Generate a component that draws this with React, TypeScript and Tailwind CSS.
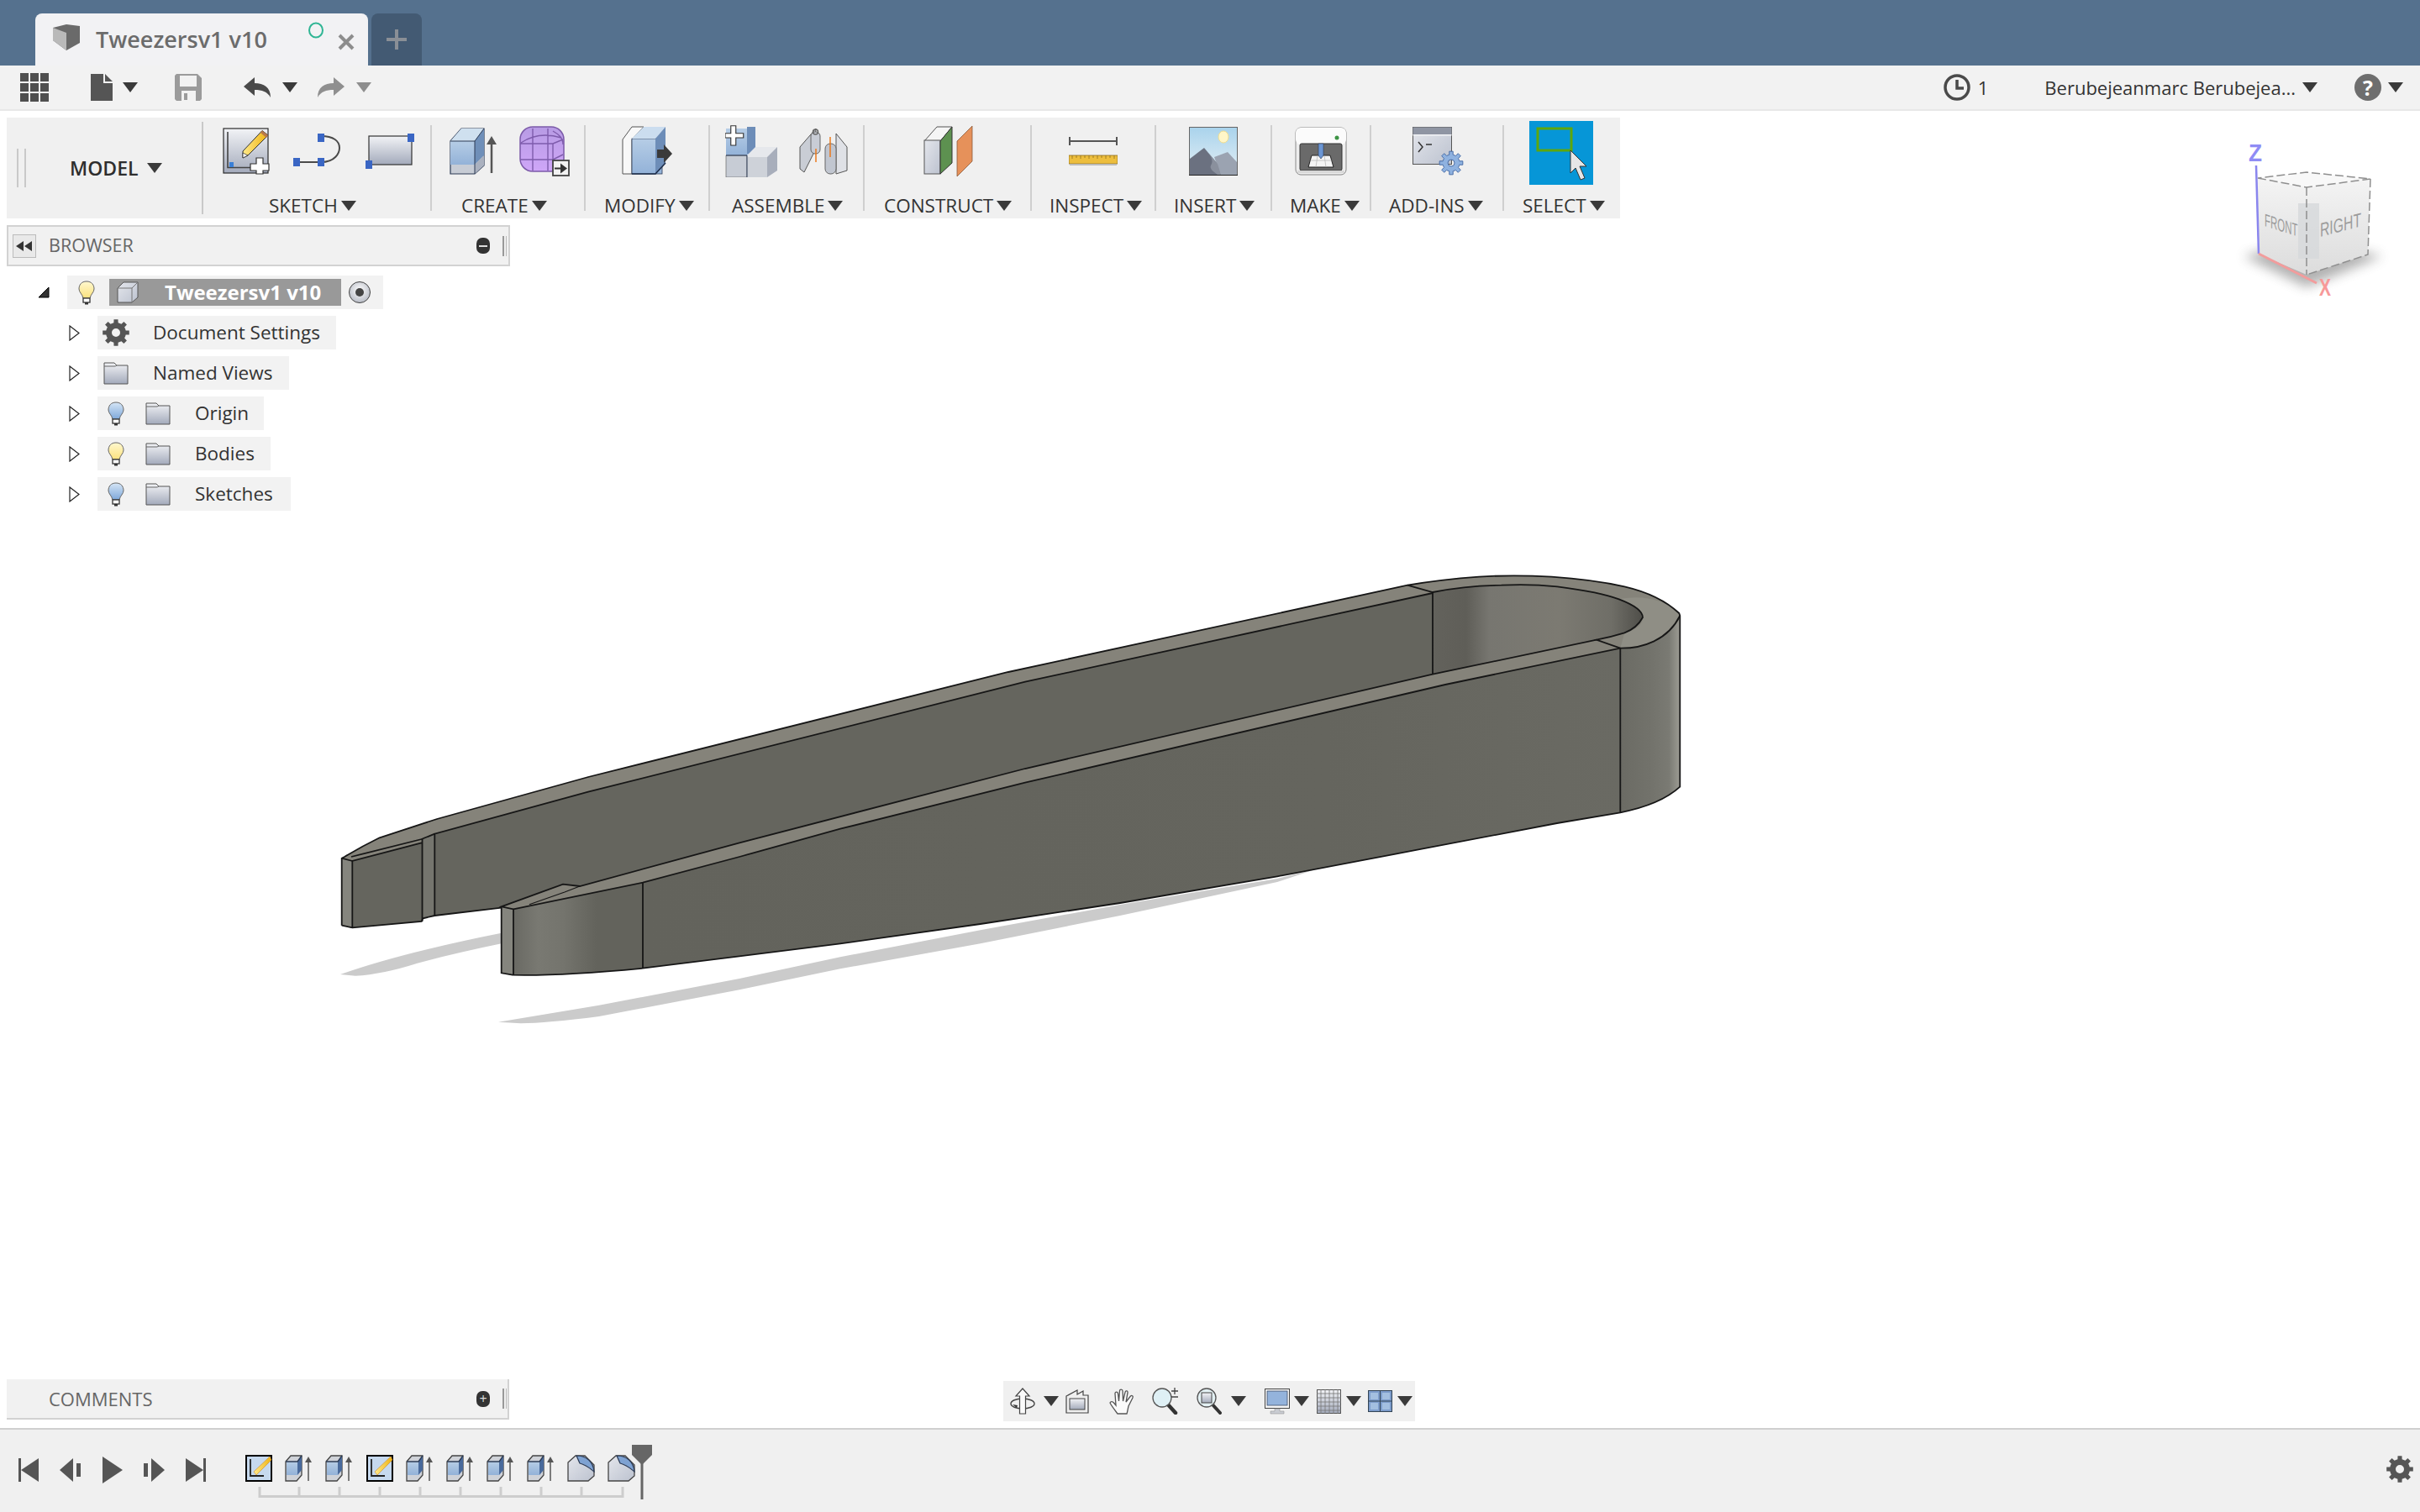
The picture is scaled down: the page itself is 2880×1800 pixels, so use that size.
import type { ReactNode } from "react";

// Fusion 360 style window: tab bar, quick access bar, ribbon, browser tree,
// model viewport, navigation bar and timeline.

const gearPath = (cx: number, cy: number, r1: number, r2: number, hole: number, teeth = 8) => {
  let d = "";
  const step = (Math.PI * 2) / teeth;
  for (let i = 0; i < teeth; i++) {
    const a = i * step;
    const pts: [number, number][] = [
      [r1, a - step * 0.5],
      [r1, a - step * 0.28],
      [r2, a - step * 0.2],
      [r2, a + step * 0.2],
      [r1, a + step * 0.28],
    ];
    for (const [r, t] of pts) {
      const x = cx + r * Math.sin(t);
      const y = cy - r * Math.cos(t);
      d += `${d ? "L" : "M"}${x.toFixed(2)} ${y.toFixed(2)}`;
    }
  }
  d += `Z M${cx + hole} ${cy} A${hole} ${hole} 0 1 0 ${cx - hole} ${cy} A${hole} ${hole} 0 1 0 ${cx + hole} ${cy}Z`;
  return d;
};

function Defs() {
  return (
    <svg className="absolute h-0 w-0">
      <defs>
        <linearGradient id="silver" x1="0" y1="0" x2="0" y2="1">
          <stop offset="0" stopColor="#f2f3f6" />
          <stop offset="1" stopColor="#a3aabb" />
        </linearGradient>
        <linearGradient id="silverSoft" x1="0" y1="0" x2="1" y2="1">
          <stop offset="0" stopColor="#e4e6ec" />
          <stop offset="1" stopColor="#bcc2cf" />
        </linearGradient>
        <linearGradient id="blueFace" x1="0" y1="0" x2="0" y2="1">
          <stop offset="0" stopColor="#b6cde6" />
          <stop offset="1" stopColor="#93b2d8" />
        </linearGradient>
        <linearGradient id="pencil" x1="0" y1="0" x2="1" y2="0">
          <stop offset="0" stopColor="#ffe98a" />
          <stop offset="1" stopColor="#efb310" />
        </linearGradient>
        <linearGradient id="sky" x1="0" y1="0" x2="0" y2="1">
          <stop offset="0" stopColor="#a9d3ec" />
          <stop offset="1" stopColor="#e5eff5" />
        </linearGradient>
        <linearGradient id="form" x1="0" y1="0" x2="0" y2="1">
          <stop offset="0" stopColor="#b79be4" />
          <stop offset="1" stopColor="#cfa6f8" />
        </linearGradient>
        <linearGradient id="bulbY" x1="0" y1="0" x2="0" y2="1">
          <stop offset="0" stopColor="#fff8cf" />
          <stop offset="1" stopColor="#fbe27e" />
        </linearGradient>
        <linearGradient id="bulbB" x1="0" y1="0" x2="0" y2="1">
          <stop offset="0" stopColor="#d5e5f5" />
          <stop offset="1" stopColor="#7ea8da" />
        </linearGradient>
        <radialGradient id="radio" cx="0.5" cy="0.4" r="0.6">
          <stop offset="0" stopColor="#ffffff" />
          <stop offset="1" stopColor="#b8bcc6" />
        </radialGradient>
        <linearGradient id="nearTip" gradientUnits="userSpaceOnUse" x1="611" y1="0" x2="710" y2="0">
          <stop offset="0" stopColor="#696963" />
          <stop offset="0.3" stopColor="#797972" />
          <stop offset="0.6" stopColor="#74746d" />
          <stop offset="1" stopColor="#63635c" />
        </linearGradient>
        <linearGradient id="nearFace" gradientUnits="userSpaceOnUse" x1="765" y1="0" x2="1928" y2="0">
          <stop offset="0" stopColor="#63635c" />
          <stop offset="0.7" stopColor="#65655e" />
          <stop offset="1" stopColor="#6a6a63" />
        </linearGradient>
        <linearGradient id="wall" gradientUnits="userSpaceOnUse" x1="1928" y1="0" x2="1999" y2="0">
          <stop offset="0" stopColor="#6b6b64" />
          <stop offset="0.5" stopColor="#72726b" />
          <stop offset="0.82" stopColor="#7a7a73" />
          <stop offset="1" stopColor="#9c9b93" />
        </linearGradient>
        <linearGradient id="cavity" gradientUnits="userSpaceOnUse" x1="1705" y1="0" x2="1955" y2="0">
          <stop offset="0" stopColor="#63625c" />
          <stop offset="0.16" stopColor="#5f5e58" />
          <stop offset="0.27" stopColor="#777670" />
          <stop offset="0.6" stopColor="#7c7a72" />
          <stop offset="0.85" stopColor="#6f6e67" />
          <stop offset="1" stopColor="#4f4e49" />
        </linearGradient>
        <linearGradient id="cubeFace" x1="0" y1="0" x2="0" y2="1">
          <stop offset="0" stopColor="#f4f4f4" />
          <stop offset="1" stopColor="#dcdcdc" />
        </linearGradient>
        <filter id="blur6" x="-30%" y="-60%" width="160%" height="220%">
          <feGaussianBlur stdDeviation="7" />
        </filter>
      </defs>
    </svg>
  );
}

function Caret({ grey }: { grey?: boolean }) {
  return (
    <svg width={18} height={12} viewBox="0 0 18 12" className="shrink-0">
      <polygon points="0,0 18,0 9,12" fill={grey ? "#8e8e8e" : "#3a3a3a"} />
    </svg>
  );
}

function Ico({ w, h, className, children }: { w: number; h: number; className?: string; children: ReactNode }) {
  return (
    <svg width={w} height={h} viewBox={`0 0 ${w} ${h}`} className={`shrink-0 ${className ?? ""}`}>
      {children}
    </svg>
  );
}

/* ---------- ribbon icons ---------- */

const Blue = ({ x, y }: { x: number; y: number }) => (
  <rect x={x} y={y} width="8" height="10" fill="#3a66c4" />
);

function SketchIcon() {
  return (
    <Ico w={56} h={56}>
      <rect x="1" y="1" width="53" height="53" fill="url(#silver)" stroke="#2b2b2b" strokeWidth="1.2" />
      <path d="M6 5V47.500H34" fill="none" stroke="#444" strokeWidth="1.6" />
      <rect x="8" y="41" width="5" height="6" fill="#3a7fd6" />
      <path d="M24 28 L47 3.500 L54 9 L30 33 L24 36 Z" fill="url(#pencil)" stroke="#333" strokeWidth="1" />
      <path d="M47 3.500 L54 9 L52 12 L45 6Z" fill="#b9794a" />
      <path d="M24 30 L24 36 L30 33Z" fill="#fff" stroke="#333" strokeWidth="0.8" />
      <path d="M41 37h8v7h7v8h-7v4h-8v-4h-7v-8h7z" fill="#fff" stroke="#333" strokeWidth="1.2" transform="translate(-1 -1)" />
    </Ico>
  );
}

function ArcIcon() {
  return (
    <Ico w={58} h={42}>
      <path d="M4 34H33C50 34 55 23 55 17C55 9 48 3 33 3" fill="none" stroke="#4a4a4a" strokeWidth="2" />
      <Blue x={0} y={29} />
      <Blue x={29} y={29} />
      <Blue x={29} y={0} />
    </Ico>
  );
}

function RectIcon() {
  return (
    <Ico w={58} h={42}>
      <rect x="4" y="3" width="51" height="34" fill="url(#silver)" stroke="#333" strokeWidth="1.2" />
      <Blue x={50} y={0} />
      <Blue x={0} y={32} />
    </Ico>
  );
}

function ExtrudeIcon() {
  return (
    <Ico w={56} h={56}>
      <path d="M1 16 L14 1 H41 V45 L30 55 H1Z" fill="#c7ccd5" stroke="#2c3b55" strokeWidth="1.2" />
      <path d="M1 16 L14 1 H41 L30 16Z" fill="#cfe0ef" />
      <rect x="1" y="16" width="29" height="28" fill="url(#blueFace)" />
      <path d="M30 16 L41 1 V33 L30 44Z" fill="#6f8fb9" />
      <path d="M30 44 L41 33 V45 L30 55Z" fill="#aab1bf" />
      <path d="M1 16H30L41 1M30 16V55" fill="none" stroke="#2c3b55" strokeWidth="1" />
      <path d="M50 54V14" stroke="#555" strokeWidth="2.500" />
      <path d="M44 20L50 10L56 20Z" fill="#555" />
    </Ico>
  );
}

function FormIcon() {
  return (
    <Ico w={62} h={60}>
      <rect x="1" y="1" width="52" height="53" rx="15" fill="url(#form)" stroke="#7b5aa8" strokeWidth="1.5" />
      <path d="M1 21H40M1 40H40M16 3V53M34 3V53M40 6C47 10 52 14 52 22M2 20C14 12 30 8 50 14M40 21V53M40 21L52 16M40 40L52 34" fill="none" stroke="#7e5cac" strokeWidth="1.4" />
      <rect x="40" y="41" width="19" height="18" fill="#f2f2f2" stroke="#444" strokeWidth="1.800" />
      <path d="M42 49.500h7v-5l8 6l-8 6v-5h-7z" fill="#333" />
    </Ico>
  );
}

function ModifyIcon() {
  return (
    <Ico w={62} h={60}>
      <path d="M1 16 L12 1 L26 1 L12 16 V57 H1Z" fill="#f8f8f8" stroke="#555" strokeWidth="1" />
      <rect x="12" y="15" width="36" height="42" fill="url(#blueFace)" stroke="#2c3b55" strokeWidth="0.8" />
      <path d="M12 15 L26 1 H52 L40 15Z" fill="#cbddef" />
      <path d="M40 15 L52 1 V44 L40 57Z" fill="#6d8db8" />
      <path d="M12 57H40L52 44" fill="none" stroke="#1d2c48" strokeWidth="1.600" />
      <path d="M42 28V38H50V44L60 33L50 22V28Z" fill="#3a3a3a" />
    </Ico>
  );
}

function AssembleIcon() {
  return (
    <Ico w={64} h={62}>
      <path d="M1 4H36V36H1Z" fill="url(#blueFace)" />
      <path d="M26 2 H36 V34 H26Z" fill="#6d8db8" />
      <path d="M1 36H26V62H1Z" fill="#c7ccd5" stroke="#555" strokeWidth="0.6" />
      <path d="M26 36 L36 26 H62 L50 38 H26Z" fill="#e6e8ec" />
      <path d="M26 38H50V62H26Z" fill="#ced2d9" />
      <path d="M50 38L62 26V54L50 62Z" fill="#a8aebb" />
      <path d="M1 36H26M26 36V62" stroke="#2c3b55" strokeWidth="1" fill="none" />
      <path d="M9 1h8v12h12v7H17v12H9V20H0v-7h9z" transform="scale(0.75)" fill="#fff" stroke="#333" strokeWidth="1.500" />
    </Ico>
  );
}

function JointIcon() {
  return (
    <Ico w={58} h={58}>
      <path d="M1 50V24L20 2L18 30L6 54Z" fill="#c9cdd5" stroke="#555" strokeWidth="1" />
      <path d="M57 52V24L44 8V56Z" fill="#dfe1e6" stroke="#555" strokeWidth="1" />
      <rect x="14" y="6" width="11" height="26" rx="5" fill="#c8ccd5" stroke="#666" />
      <rect x="31" y="20" width="13" height="36" rx="6" fill="#c1c6d0" stroke="#666" />
      <circle cx="19.500" cy="6" r="3" fill="none" stroke="#666" strokeWidth="1.500" />
      <path d="M20 26V42M37 12V36" stroke="#ea7a1c" strokeWidth="1.500" />
    </Ico>
  );
}

function ConstructIcon() {
  return (
    <Ico w={62} h={60}>
      <path d="M1 18L16 1H34L20 18Z" fill="#f5f5f5" stroke="#555" strokeWidth="1" />
      <rect x="1" y="17" width="19" height="40" fill="url(#silverSoft)" stroke="#555" strokeWidth="1" />
      <path d="M20 18L34 1V44L20 57Z" fill="#5d9150" stroke="#333" strokeWidth="1" />
      <path d="M40 18L58 0V42L40 60Z" fill="#e6915a" stroke="#8a5a3a" strokeWidth="0.8" />
    </Ico>
  );
}

function InspectIcon() {
  return (
    <Ico w={58} h={34}>
      <path d="M1 0V10M57 0V10" stroke="#555" strokeWidth="2" />
      <rect x="1" y="4" width="56" height="2" fill="#555" />
      <rect x="0" y="22" width="58" height="10" fill="#edbe3e" stroke="#8f6e1c" strokeWidth="0.8" />
      <path d="M4 22v4M9 22v3M14 22v4M19 22v3M24 22v4M29 22v3M34 22v4M39 22v3M44 22v4M49 22v3M54 22v4" stroke="#8f6e1c" strokeWidth="0.8" />
      <rect x="1" y="32" width="56" height="2" fill="#bbbbbb" />
    </Ico>
  );
}

function InsertIcon() {
  return (
    <Ico w={58} h={58}>
      <rect x="0.500" y="0.500" width="57" height="57" fill="url(#sky)" stroke="#666" />
      <ellipse cx="41" cy="12" rx="6" ry="7" fill="#fff6c8" stroke="#f0dd8e" />
      <path d="M1 57V38L18 25L34 44L38 57Z" fill="#6b7180" />
      <path d="M30 36L46 30L57 42V57H38Z" fill="#9ba3b1" />
      <path d="M18 25C26 34 30 40 26 46C24 50 30 54 34 57H38L34 44Z" fill="#8a909d" />
      <path d="M0 57.500H58" stroke="#222" strokeWidth="1.200" />
    </Ico>
  );
}

function MakeIcon() {
  return (
    <Ico w={62} h={58}>
      <rect x="1" y="1" width="60" height="56" rx="6" fill="#eeeeee" stroke="#888" />
      <rect x="1" y="1" width="60" height="20" rx="6" fill="#fbfbfb" />
      <circle cx="50" cy="13" r="2.500" fill="#3d9445" />
      <rect x="6" y="20" width="50" height="32" rx="2" fill="#6a6a6a" stroke="#333" />
      <path d="M20 34H42L46 48H16Z" fill="#f4f4f4" stroke="#222" strokeWidth="1" />
      <path d="M18 40H44M27 34L25 48M35 34L37 48" stroke="#aaa" strokeWidth="0.6" />
      <path d="M28 20H34V34L31 38L28 34Z" fill="#6b96d4" stroke="#2c3b55" strokeWidth="0.6" />
      <rect x="3" y="52" width="56" height="3" fill="#d8d8d8" />
    </Ico>
  );
}

function AddInsIcon() {
  return (
    <Ico w={62} h={58}>
      <rect x="0.500" y="0.500" width="46" height="44" fill="url(#silverSoft)" stroke="#555" />
      <rect x="0.500" y="0.500" width="46" height="9" fill="#8f95a3" />
      <rect x="0.500" y="9" width="46" height="1.500" fill="#f2f3f6" />
      <path d="M7 18L12 24L7 30" fill="none" stroke="#333" strokeWidth="1.500" />
      <path d="M16 21H23" stroke="#333" strokeWidth="1.500" />
      <path d={gearPath(46, 43, 10, 14, 4)} fill="#8fb2e0" stroke="#4a6ea8" strokeWidth="1" fillRule="evenodd" />
    </Ico>
  );
}

function SelectIcon() {
  return (
    <div className="relative h-[76px] w-[76px] bg-[#0696d7]">
      <Ico w={76} h={76}>
        <rect x="10" y="9" width="40" height="26" fill="none" stroke="#5ea60c" strokeWidth="3" />
        <path d="M49 35V62L55 56L61 70L66 68L60 54H68Z" fill="#e6e6e6" stroke="#333" strokeWidth="1" />
      </Ico>
    </div>
  );
}

/* ---------- ribbon ---------- */

const groups = [
  { label: "SKETCH", box: "w-[270px]", icons: "pl-[23px] gap-[28px]", text: "pl-[78px]", content: [<SketchIcon key="a" />, <ArcIcon key="b" />, <RectIcon key="c" />] },
  { label: "CREATE", box: "w-[181px]", icons: "pl-[21px] gap-[27px]", text: "pl-[35px]", content: [<ExtrudeIcon key="a" />, <FormIcon key="b" />] },
  { label: "MODIFY", box: "w-[146px]", icons: "pl-[43px]", text: "pl-[22px]", content: [<ModifyIcon key="a" />] },
  { label: "ASSEMBLE", box: "w-[182px]", icons: "pl-[18px] gap-[24px]", text: "pl-[26px]", content: [<AssembleIcon key="a" />, <JointIcon key="b" />] },
  { label: "CONSTRUCT", box: "w-[197px]", icons: "pl-[70px]", text: "pl-[23px]", content: [<ConstructIcon key="a" />] },
  { label: "INSPECT", box: "w-[146px]", icons: "pl-[44px]", text: "pl-[21px]", content: [<InspectIcon key="a" />] },
  { label: "INSERT", box: "w-[136px]", icons: "pl-[39px]", text: "pl-[21px]", content: [<InsertIcon key="a" />] },
  { label: "MAKE", box: "w-[116px]", icons: "pl-[27px]", text: "pl-[21px]", content: [<MakeIcon key="a" />] },
  { label: "ADD-INS", box: "w-[156px]", icons: "pl-[49px]", text: "pl-[21px]", content: [<AddInsIcon key="a" />] },
];

function Ribbon() {
  return (
    <div className="ml-[8px] mt-[8px] flex h-[120px] w-[1920px] bg-[#f0f0f0]">
      <div className="flex w-[232px] items-center">
        <div className="ml-[12px] mr-[52px] flex h-[46px] gap-[7px]">
          <div className="w-[2px] bg-[#c9c9c9]" />
          <div className="w-[2px] bg-[#c9c9c9]" />
        </div>
        <span className="text-[23px] font-semibold text-[#2e2e2e]">MODEL</span>
        <span className="ml-[10px]">
          <Caret />
        </span>
      </div>
      <div className="my-[5px] w-[2px] bg-[#c9c9c9]" />
      {groups.map((g) => (
        <div key={g.label} className="flex">
          <div className={`flex flex-col ${g.box}`}>
            <div className={`flex h-[90px] shrink-0 items-center pb-[10px] ${g.icons}`}>{g.content}</div>
            <div className={`flex h-[30px] shrink-0 items-center gap-[4px] ${g.text}`}>
              <span className="text-[22.500px] text-[#333]">{g.label}</span>
              <Caret />
            </div>
          </div>
          <div className="my-[9px] w-[2px] bg-[#cfcfcf]" />
        </div>
      ))}
      <div className="flex flex-col">
        <div className="ml-[30px] h-[90px] shrink-0 pt-[4px]">
          <SelectIcon />
        </div>
        <div className="flex h-[30px] shrink-0 items-center gap-[4px] pl-[22px]">
          <span className="text-[22.500px] text-[#333]">SELECT</span>
          <Caret />
        </div>
      </div>
    </div>
  );
}

/* ---------- browser ---------- */

function Bulb({ blue }: { blue?: boolean }) {
  return (
    <Ico w={20} h={29}>
      <path d="M10 1C4 1 1 5 1 10C1 14 5 16 6 21H14C15 16 19 14 19 10C19 5 16 1 10 1Z" fill={blue ? "url(#bulbB)" : "url(#bulbY)"} stroke="#666" strokeWidth="1" />
      <rect x="6" y="21" width="8" height="5" fill="#fff" stroke="#333" strokeWidth="1.300" />
      <rect x="8" y="26" width="4" height="2.500" fill="#333" />
    </Ico>
  );
}

function Folder() {
  return (
    <Ico w={30} h={27}>
      <path d="M1 26V1H13L16 4H29V26Z" fill="url(#silver)" stroke="#555" strokeWidth="1" />
      <path d="M1 5H14L16 4" fill="none" stroke="#666" strokeWidth="1" />
    </Ico>
  );
}

function Arrow() {
  return (
    <Ico w={13} h={19} className="mr-[21px]">
      <path d="M1 1L12 9.500L1 18Z" fill="#fff" stroke="#222" strokeWidth="1.200" />
    </Ico>
  );
}

const treeRows = [
  { name: "Origin", bulb: "blue", box: "w-[198px]" },
  { name: "Bodies", bulb: "yellow", box: "w-[206px]" },
  { name: "Sketches", bulb: "blue", box: "w-[230px]" },
];

function TreeRow({ box, children }: { box: string; children: ReactNode }) {
  return (
    <div className="flex items-center pl-[82px]">
      <Arrow />
      <div className={`flex h-[40px] items-center bg-[#f2f2f2] text-[22.500px] text-[#333] ${box}`}>{children}</div>
    </div>
  );
}

function Browser() {
  return (
    <div className="ml-[8px] mt-[8px] flex h-[49px] w-[599px] items-center border-2 border-[#d2d2d2] bg-[#f1f1f1] pl-[5px]">
      <div className="flex h-[28px] w-[28px] items-center justify-center border border-[#bbb] bg-[#e9e9e9]">
        <Ico w={20} h={12}>
          <path d="M9 0V12L0 6ZM19 0V12L10 6Z" fill="#333" />
        </Ico>
      </div>
      <span className="ml-[15px] text-[21.500px] text-[#666]">BROWSER</span>
      <div className="ml-auto mr-[2px] flex items-center gap-[15px]">
        <span className="flex h-[19px] w-[16px] items-center justify-center rounded-[7px] bg-[#333]">
          <span className="h-[2px] w-[10px] bg-[#ddd]" />
        </span>
        <span className="flex h-[24px] gap-[2px]">
          <span className="w-[2px] bg-[#999]" />
          <span className="w-[1px] bg-[#bbb]" />
        </span>
      </div>
    </div>
  );
}

function Tree() {
  return (
    <div className="mt-[11px] flex flex-col gap-[8px]">
      <div className="flex items-center pl-[45px]">
        <Ico w={14} h={14} className="mr-[21px]">
          <path d="M1 13L13 1V13Z" fill="#333" stroke="#000" />
        </Ico>
        <div className="flex h-[40px] w-[376px] items-center bg-[#f2f2f2] pl-[13px]">
          <Bulb />
          <div className="ml-[17px] flex h-[32px] w-[276px] items-center bg-[#999] pl-[9px]">
            <Ico w={26} h={26}>
              <path d="M1 8L8 1H25V19L18 25H1Z" fill="url(#silverSoft)" stroke="#555" />
              <path d="M1 8H18L25 1M18 8V25" fill="none" stroke="#777" />
            </Ico>
            <span className="ml-[31px] text-[24px] font-bold text-white">Tweezersv1 v10</span>
          </div>
          <Ico w={28} h={28} className="ml-[8px]">
            <circle cx="14" cy="14" r="12.500" fill="url(#radio)" stroke="#444" />
            <circle cx="14" cy="14" r="5" fill="#444" />
          </Ico>
        </div>
      </div>
      <TreeRow box="w-[284px] pl-[6px]">
        <Ico w={32} h={32}>
          <path d={gearPath(16, 16, 12, 16, 5)} fill="#555" fillRule="evenodd" />
        </Ico>
        <span className="ml-[28px]">Document Settings</span>
      </TreeRow>
      <TreeRow box="w-[228px] pl-[7px]">
        <Folder />
        <span className="ml-[29px]">Named Views</span>
      </TreeRow>
      {treeRows.map((r) => (
        <TreeRow key={r.name} box={`${r.box} pl-[12px]`}>
          <Bulb blue={r.bulb === "blue"} />
          <span className="ml-[25px]">
            <Folder />
          </span>
          <span className="ml-[29px]">{r.name}</span>
        </TreeRow>
      ))}
    </div>
  );
}

/* ---------- model viewport ---------- */

// Long edges of the tweezers, in page pixels.
const farUpper = "L520 975 L700 925 L1200 800 L1675 696.700";
const roundOuter = "Q1715 690 1760 686.700 Q1800 684 1846.700 686.700 Q1895 690 1933.300 698.300 Q1975 708 1998.300 730 L1999.300 733";
const nearLower = "L1720 815 L1220 931.700 L1000 986.700 L880 1020 L765 1050.700 L611 1082.300";
const farLower = "L517.300 992.700 L700 942.700 L1220 811.700 L1705 706";
const nearUpper = "L1705 802.700 L1220 915 L880 1003.300 L690 1055 L670 1052.700 L596.700 1079.300";
const bottom = "L1853 980 L1686.700 1011.700 L1520 1043.300 L1333 1075 L1166.700 1100 L1000 1123.300 L880 1138.300 L765 1152.700";

function Model() {
  const line = { fill: "none", stroke: "#161616", strokeWidth: 1.8 };
  return (
    <svg className="absolute inset-0" width={2880} height={1568} viewBox="0 132 2880 1568">
      {/* ground shadows */}
      <path d="M405 1160 Q475 1135 596.700 1110.700 L596.700 1123.300 Q540 1135 496.700 1146.700 Q455 1160 423 1161.700 Z" fill="#cbcbcb" />
      <path d="M593 1216.700 L713 1196.700 L880 1165 L1000 1139.300 L1166.700 1107.300 L1333 1077 L1520 1046 L1565 1035 L1520 1050 L1333 1090 L1166.700 1123.300 L1000 1153.300 L880 1178.300 L713 1210 Q650 1218 620 1218.300Z" fill="#cbcbcb" />

      {/* top faces of both arms and the round end */}
      <path
        d={`M406.700 1021.700 L410 1020 Q430 1008 451.700 997.300 ${farUpper} ${roundOuter} C1985 762 1955 772 1928.300 771.700 ${nearLower} L596.700 1079.300 Z`}
        fill="#85837a"
      />
      <path d="M1933.300 753.300 Q1955 748 1955 735 Q1950 720 1926.700 713.300 Q1970 705 1998.300 730 L1999.300 733 C1985 762 1955 772 1928.300 771.700Z" fill="#8f8e85" />

      {/* far arm, inner side */}
      <path
        d={`M419.300 1025 L501.700 1003.300 L503.300 997.300 ${farLower} ${nearUpper} L596.700 1080.700 L517.300 1090 L503.300 1093.300 L501.700 1097 L419.300 1104.300 Z`}
        fill="#65655e"
      />
      <path d="M406.700 1021.700 L419.300 1025 V1104.300 L406.700 1101.700Z" fill="#85857e" />
      <path d="M503.300 997.300 L517.300 992.700 V1090 L503.300 1093.300Z" fill="#75756e" />

      {/* cavity of the round end */}
      <path
        d="M1705 705 Q1745 697 1786.700 696.700 Q1820 695 1853.300 698.300 Q1905 705 1926.700 713.300 Q1955 724 1955 735 Q1948 748 1933.300 753.300 Q1918 758 1900 761.700 L1705 802.700Z"
        fill="url(#cavity)"
      />

      {/* near arm */}
      <path d="M596.700 1079.300 L611 1082.300 V1160.700 L596.700 1158.300Z" fill="#85857e" />
      <path d="M611 1082.300 L765 1050.700 V1152.700 Q666 1162 610 1160.700Z" fill="url(#nearTip)" />
      <path d={`M765 1050.700 L880 1020 L1000 986.700 L1220 931.700 L1720 815 L1928.300 771.700 V967.300 ${bottom} Z`} fill="url(#nearFace)" />
      <path d="M1928.300 771.700 C1955 772 1985 762 1999.300 733 V936.700 Q1976 958 1928.300 967.300Z" fill="url(#wall)" />

      {/* edges */}
      <g {...line}>
        <path d={`M406.700 1101.700 V1021.700 L410 1020 Q430 1008 451.700 997.300 ${farUpper} ${roundOuter} V936.700 Q1976 958 1928.300 967.300 ${bottom} Q666 1162 610 1160.700 L596.700 1158.300 V1079.300`} />
        <path d="M406.700 1101.700 L419.300 1104.300 L501.700 1097 L503.300 1093.300 L517.300 1090 L596.700 1080.700" />
        <path d={`M419.300 1104.300 V1025 L501.700 1003.300 M502.500 1097 V998 M517.300 1090 V992.700 ${farLower}`} />
        <path d="M406.700 1021.700 L419.300 1025 M418 1020 L501.700 999 L517.300 992.700" />
        <path d="M1675 696.700 L1705 705 Q1745 697 1786.700 696.700 Q1820 695 1853.300 698.300 Q1905 705 1926.700 713.300 Q1955 724 1955 735 Q1948 748 1933.300 753.300 Q1918 758 1900 761.700 L1928.300 771.700" />
        <path d={`M1705 705 V802.700 M1900 761.700 ${nearUpper} L611 1082.300`} />
        <path d="M611 1082.300 L765 1050.700 L880 1020 L1000 986.700 L1220 931.700 L1720 815 L1928.300 771.700 C1955 772 1985 762 1999.300 733" />
        <path d="M611 1082.300 V1160.700 M765 1050.700 V1152.700 M1928.300 771.700 V967.300" />
        <path d="M630 1076.700 L672 1062 L690 1055" strokeWidth="1.200" />
      </g>
    </svg>
  );
}

function ViewCube() {
  const dash = { fill: "none", stroke: "#8f8f8f", strokeWidth: 1.500 };
  return (
    <svg className="absolute left-[2660px] top-[34px]" width={190} height={196} viewBox="2660 166 190 196">
      <path d="M2670 305 L2745 342 L2835 305 L2745 285Z" fill="#555" opacity="0.45" filter="url(#blur6)" />
      <path d="M2687 212 L2745 223 L2821 213 L2818 303 L2745 327 L2687 302Z" fill="url(#cubeFace)" />
      <path d="M2687 212 L2745 205 L2821 213 L2745 223Z" fill="#f8f8f8" />
      <rect x="2735" y="242" width="25" height="66" fill="#d6d8db" opacity="0.8" />
      <g {...dash} strokeDasharray="10 4">
        <path d="M2687 212 L2745 223 L2821 213 L2745 205Z" />
        <path d="M2745 223 V327 M2821 213 L2818 303 L2745 327" />
      </g>
      <path d="M2685 197 L2688 302" stroke="#8a86ee" strokeWidth="2.500" fill="none" />
      <path d="M2688 302 L2757 337" stroke="#f29c9c" strokeWidth="3" fill="none" />
      <text x="2676" y="192" fontSize="30" fontWeight="700" fontFamily="'Liberation Sans',sans-serif" fill="#8f8cf5" textLength="16" lengthAdjust="spacingAndGlyphs">Z</text>
      <text x="2760" y="352" fontSize="30" fontWeight="700" fontFamily="'Liberation Sans',sans-serif" fill="#f79999" textLength="14" lengthAdjust="spacingAndGlyphs">X</text>
      <text transform="matrix(0.94 0.3 0 1 2695 269)" fontSize="21" fontFamily="'Liberation Sans',sans-serif" fill="#9c9c9c" textLength="42" lengthAdjust="spacingAndGlyphs">FRONT</text>
      <text transform="matrix(1 -0.26 0 1 2761 282)" fontSize="23" fontFamily="'Liberation Sans',sans-serif" fill="#9c9c9c" textLength="49" lengthAdjust="spacingAndGlyphs">RIGHT</text>
    </svg>
  );
}

/* ---------- nav bar ---------- */

function OrbitIcon() {
  return (
    <Ico w={32} h={32}>
      <ellipse cx="16" cy="19" rx="14" ry="6" fill="none" stroke="#444" strokeWidth="1.400" />
      <path d="M16 1L24 10H19.500V31H12.500V10H8Z" fill="#fafafa" stroke="#444" strokeWidth="1.200" />
      <path d="M10 21L4 20L9 24Z" fill="#333" />
    </Ico>
  );
}

function LookAtIcon() {
  return (
    <Ico w={28} h={30}>
      <path d="M1 9L14 2V7L21 3V8H27V29H1Z" fill="#efefef" stroke="#444" strokeWidth="1.200" />
      <rect x="5" y="12" width="18" height="13" fill="url(#silver)" stroke="#444" />
    </Ico>
  );
}

function HandIcon() {
  return (
    <Ico w={30} h={31}>
      <path
        d="M10 30C7 26 3 21 1 17C2 15 4 15.500 5.500 17L8 20L7 6C7 3.500 10 3.500 10.500 6L11.500 15L12.500 3C12.500 0.500 16 0.500 16 3L16.500 15L19 4.500C19.500 2 22.500 2.500 22 5L20 16L25.500 9C27 7.500 29 9 28 11L23 21C22 25 22 27 21 30Z"
        fill="#fbfbfb"
        stroke="#555"
        strokeWidth="1.300"
      />
    </Ico>
  );
}

function ZoomPlusIcon() {
  return (
    <Ico w={32} h={32}>
      <path d="M18 19L28 30" stroke="#333" strokeWidth="4.500" strokeLinecap="round" />
      <circle cx="12" cy="12" r="11" fill="#dff0f5" stroke="#555" strokeWidth="1.300" />
      <path d="M23 4H31M27 0V8M23 11H31" stroke="#444" strokeWidth="1.300" />
    </Ico>
  );
}

function ZoomWinIcon() {
  return (
    <Ico w={30} h={32}>
      <path d="M18 19L28 30" stroke="#333" strokeWidth="4" strokeLinecap="round" />
      <circle cx="12" cy="12" r="11" fill="#e3f0f3" stroke="#555" strokeWidth="1.300" />
      <rect x="6" y="6" width="12" height="12" fill="url(#silver)" stroke="#444" />
    </Ico>
  );
}

function MonitorIcon() {
  return (
    <Ico w={30} h={31}>
      <rect x="0.500" y="0.500" width="29" height="23" fill="#f5f5f5" stroke="#444" />
      <rect x="3" y="3" width="24" height="17" fill="#94b3dc" stroke="#3c4d68" strokeWidth="0.800" />
      <path d="M12 24H18V27H23V30H7V27H12Z" fill="#c9ccd2" stroke="#888" strokeWidth="0.500" />
    </Ico>
  );
}

function GridIcon() {
  const ticks = [5, 10, 15, 20, 25];
  return (
    <Ico w={29} h={29}>
      <rect x="0.500" y="0.500" width="28" height="28" fill="url(#silver)" stroke="#555" />
      {ticks.map((t) => (
        <path key={t} d={`M${t} 0V29M0 ${t}H29`} stroke="#777" strokeWidth="0.800" />
      ))}
    </Ico>
  );
}

function ViewportsIcon() {
  return (
    <Ico w={29} h={26}>
      <rect x="0.500" y="0.500" width="28" height="25" fill="#7c9ccb" stroke="#345" />
      <path d="M14.500 0V26M0 13H29" stroke="#345" strokeWidth="1" />
      <rect x="3" y="3" width="9" height="8" fill="#a3bfe0" />
      <rect x="17" y="3" width="9" height="8" fill="#a3bfe0" />
      <rect x="3" y="15" width="9" height="8" fill="#a3bfe0" />
      <rect x="17" y="15" width="9" height="8" fill="#a3bfe0" />
    </Ico>
  );
}

function NavBar() {
  return (
    <div className="ml-[588px] mt-[2px] flex h-[48px] w-[490px] items-center bg-[#f0f0f0] pl-[7px]">
      <OrbitIcon />
      <span className="ml-[9px]"><Caret /></span>
      <span className="ml-[8px]"><LookAtIcon /></span>
      <span className="ml-[24px]"><HandIcon /></span>
      <span className="ml-[21px]"><ZoomPlusIcon /></span>
      <span className="ml-[21px]"><ZoomWinIcon /></span>
      <span className="ml-[11px]"><Caret /></span>
      <span className="ml-[22px]"><MonitorIcon /></span>
      <span className="ml-[5px]"><Caret /></span>
      <span className="ml-[9px]"><GridIcon /></span>
      <span className="ml-[6px]"><Caret /></span>
      <span className="ml-[8px]"><ViewportsIcon /></span>
      <span className="ml-[6px]"><Caret /></span>
    </div>
  );
}

/* ---------- timeline ---------- */

function Track() {
  const kinds = ["s", "e", "e", "s", "e", "e", "e", "e", "f", "f"];
  return (
    <svg width={490} height={70} viewBox="290 1718 490 70" className="ml-[45px] mt-[16px] shrink-0">
      {kinds.map((k, i) => {
        const x = 292 + i * 48;
        if (k === "s") {
          return (
            <g key={i} transform={`translate(${x} 1732)`}>
              <rect x="1" y="1" width="30" height="30" fill="#c6d9ee" stroke="#000" strokeWidth="2" />
              <path d="M6 5V25H22" fill="none" stroke="#222" strokeWidth="1.800" />
              <path d="M10 20L29 2L31 6L13 24Z" fill="url(#pencil)" stroke="#c98a2e" strokeWidth="0.600" />
            </g>
          );
        }
        if (k === "e") {
          return (
            <g key={i} transform={`translate(${x} 1732)`}>
              <path d="M0 8L6 1H19V24L13 31H0Z" fill="#cfd2d8" stroke="#444" strokeWidth="1.300" />
              <rect x="1" y="8" width="13" height="16" fill="url(#blueFace)" />
              <path d="M14 8L19 1V18L14 24Z" fill="#496a9c" />
              <path d="M0 8H14L19 1" fill="none" stroke="#2c3b55" strokeWidth="1.300" />
              <path d="M27 31V6" stroke="#555" strokeWidth="1.500" />
              <path d="M23 9L27 2L31 9Z" fill="#555" />
            </g>
          );
        }
        return (
          <g key={i} transform={`translate(${x} 1732)`}>
            <path d="M0 9L9 1H20L31 12V25L24 31H0Z" fill="url(#silverSoft)" stroke="#444" strokeWidth="1.300" />
            <path d="M10 1C22 1 30 8 31 20C26 16 22 12 14 10Z" fill="#7ea2d2" stroke="#2c3b55" strokeWidth="1.200" />
          </g>
        );
      })}
      <path d="M309 1770V1781.500H741V1770M356 1770V1781M404 1770V1781M452 1770V1781M500 1770V1781M548 1770V1781M596 1770V1781M644 1770V1781M692 1770V1781" fill="none" stroke="#cdcdcd" strokeWidth="3" />
      <path d="M752 1720H776V1732L764 1744L752 1732Z" fill="#666" />
      <path d="M764 1736V1785" stroke="#666" strokeWidth="3" />
    </svg>
  );
}

function Timeline() {
  return (
    <div className="flex h-[100px] items-start border-t-2 border-[#cfcfcf] bg-[#f0f0f0]">
      <div className="ml-[22px] mt-[32px] flex items-center gap-[25px]">
        <Ico w={24} h={28}>
          <path d="M0 0H3V28H0ZM24 0V28L3 14Z" fill="#555" />
        </Ico>
        <Ico w={26} h={28}>
          <path d="M16 0V28L0 14ZM20 6H25V22H20Z" fill="#555" />
        </Ico>
        <Ico w={24} h={32}>
          <path d="M0 0L24 16L0 32Z" fill="#555" />
        </Ico>
        <Ico w={25} h={28}>
          <path d="M0 6H5V22H0ZM9 0L25 14L9 28Z" fill="#555" />
        </Ico>
        <Ico w={24} h={28}>
          <path d="M0 0L21 14L0 28ZM21 0H24V28H21Z" fill="#555" />
        </Ico>
      </div>
      <Track />
      <div className="ml-auto mr-[8px] mt-[31px]">
        <Ico w={32} h={32}>
          <path d={gearPath(16, 16, 12, 16, 5)} fill="#555" fillRule="evenodd" />
        </Ico>
      </div>
    </div>
  );
}

export default function App() {
  return (
    <div className="flex h-[1800px] w-[2880px] flex-col overflow-hidden bg-white font-['Open_Sans',sans-serif]">
      <Defs />

      {/* tab bar */}
      <div className="flex h-[78px] shrink-0 items-end gap-[4px] bg-[#55718e] pl-[42px]">
        <div className="flex h-[62px] w-[396px] items-start rounded-t-[8px] bg-[#f2f2f4]">
          <Ico w={34} h={32} className="ml-[20px] mt-[13px]">
            <path d="M1 4L17 0L33 2V22L17 31L1 19Z" fill="#6a6a6a" />
            <path d="M1 4L17 10V31L1 19Z" fill="#b9b9b9" />
          </Ico>
          <span className="ml-[18px] mt-[11px] text-[27px] font-semibold text-[#6b6b6b]">Tweezersv1 v10</span>
          <Ico w={20} h={20} className="ml-[48px] mt-[10px]">
            <ellipse cx="10" cy="10" rx="8" ry="8.500" fill="none" stroke="#2fb594" strokeWidth="2" />
          </Ico>
          <Ico w={20} h={20} className="ml-[16px] mt-[24px]">
            <path d="M2 2L18 18M18 2L2 18" stroke="#8d8d8d" strokeWidth="4" />
          </Ico>
        </div>
        <div className="flex h-[62px] w-[60px] items-center justify-center rounded-t-[8px] bg-[#435a73]">
          <Ico w={24} h={24}>
            <path d="M12 0V24M0 12H24" stroke="#8a8f96" strokeWidth="4" />
          </Ico>
        </div>
      </div>

      {/* quick access bar */}
      <div className="flex h-[54px] shrink-0 items-center border-b-2 border-[#e8e8e8] bg-[#f2f2f2] pl-[24px]">
        <Ico w={34} h={34}>
          <path d="M0 0H10V10H0ZM12 0H22V10H12ZM24 0H34V10H24ZM0 12H10V22H0ZM12 12H22V22H12ZM24 12H34V22H24ZM0 24H10V34H0ZM12 24H22V34H12ZM24 24H34V34H24Z" fill="#4f4f4f" />
        </Ico>
        <Ico w={26} h={32} className="ml-[50px]">
          <path d="M0 0H15V11H26V32H0ZM17 0L26 9H17Z" fill="#555" />
        </Ico>
        <span className="ml-[12px]"><Caret /></span>
        <Ico w={32} h={32} className="ml-[44px]">
          <path d="M2 0H27L32 5V30L30 32H2L0 30V2Z" fill="#9b9b9b" />
          <rect x="6" y="2" width="20" height="13" fill="#f2f2f2" />
          <rect x="8" y="20" width="17" height="12" fill="#f2f2f2" />
          <rect x="11" y="23" width="4" height="8" fill="#9b9b9b" />
        </Ico>
        <Ico w={32} h={24} className="ml-[50px]">
          <path d="M0 11L13 0V7C24 7 32 12 32 24C28 17 22 15 13 15V22Z" fill="#4a4a4a" />
        </Ico>
        <span className="ml-[14px]"><Caret /></span>
        <Ico w={32} h={24} className="ml-[24px]">
          <path d="M32 11L19 0V7C8 7 0 12 0 24C4 17 10 15 19 15V22Z" fill="#8f8f8f" />
        </Ico>
        <span className="ml-[14px]"><Caret grey /></span>

        <div className="ml-auto flex items-center text-[22px] text-[#333]">
          <Ico w={32} h={32}>
            <circle cx="16" cy="16" r="14" fill="none" stroke="#4a4a4a" strokeWidth="3.500" />
            <path d="M16 7V17H24" fill="none" stroke="#4a4a4a" strokeWidth="3.500" />
          </Ico>
          <span className="ml-[9px]">1</span>
          <span className="ml-[67px]">Berubejeanmarc Berubejea...</span>
          <span className="ml-[8px]"><Caret /></span>
          <div className="ml-[44px] flex h-[32px] w-[32px] items-center justify-center rounded-full bg-[#6e6e6e] text-[25px] font-bold leading-none text-white">?</div>
          <span className="ml-[8px] mr-[20px]"><Caret /></span>
        </div>
      </div>

      {/* workspace */}
      <div className="relative flex min-h-0 flex-1 flex-col">
        <Model />
        <ViewCube />
        <div className="relative flex min-h-0 flex-1 flex-col pb-[8px]">
          <Ribbon />
          <Browser />
          <Tree />
          <div className="ml-[8px] mt-auto flex">
            <div className="flex h-[48px] w-[598px] items-center border-b-2 border-r-2 border-[#d2d2d2] bg-[#f1f1f1] pl-[50px]">
              <span className="text-[22px] text-[#666]">COMMENTS</span>
              <div className="ml-auto mr-[1px] flex items-center gap-[15px]">
                <span className="flex h-[19px] w-[16px] items-center justify-center rounded-[7px] bg-[#333] text-[16px] leading-none text-[#ddd]">+</span>
                <span className="flex h-[24px] gap-[2px]">
                  <span className="w-[2px] bg-[#999]" />
                  <span className="w-[1px] bg-[#bbb]" />
                </span>
              </div>
            </div>
            <NavBar />
          </div>
        </div>
      </div>

      <Timeline />
    </div>
  );
}
